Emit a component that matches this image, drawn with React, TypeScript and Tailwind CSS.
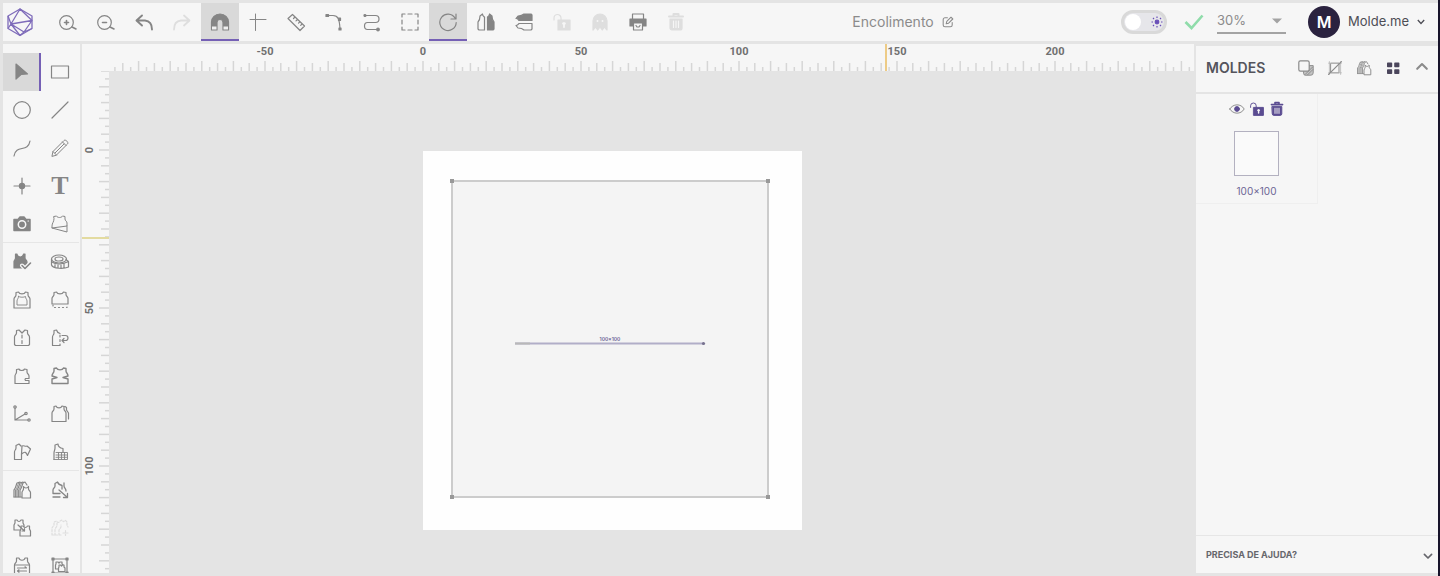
import type { ReactNode } from 'react';
import clsx from 'clsx';

interface Tool {
  name: string;
  icon: ReactNode;
  active?: boolean;
  disabled?: boolean;
}

const UNIT = 3.16;

const VEST = 'M4 2.5 L6.5 2 C7.5 4.5 12.5 4.5 13.5 2 L16 2.5 V5 C16 7 18 7 18 9 V18 H2 V9 C2 7 4 7 4 5 Z';
const SHORT_VEST = 'M4 2.5 L6.5 2 C7.5 4.5 12.5 4.5 13.5 2 L16 2.5 V4.5 C16 6.5 18 6.5 18 8.5 V14 H2 V8.5 C2 6.5 4 6.5 4 4.5 Z';

const Icon = ({ children, size = 20 }: { children: ReactNode; size?: number }) => (
  <svg
    width={size}
    height={size}
    viewBox="0 0 20 20"
    fill="none"
    stroke="currentColor"
    strokeWidth={1.2}
    strokeLinecap="round"
    strokeLinejoin="round"
    aria-hidden="true"
  >
    {children}
  </svg>
);

const LockArt = () => (
  <>
    <path d="M2 8 V6 a3.5 3.5 0 0 1 7 0 V9" />
    <path d="M6 8 H18 V18 H6 Z" fill="currentColor" />
    <path d="M12 11 V15 M11 11.5 H13" stroke="#f6f6f6" strokeWidth={1.8} />
  </>
);

const TrashArt = () => (
  <>
    <path d="M3 4.5 H17 M7.5 4 V2 H12.5 V4" strokeWidth={2} />
    <path d="M4 7 H16 V16 a2 2 0 0 1 -2 2 H6 a2 2 0 0 1 -2 -2 Z" fill="currentColor" />
    <path d="M7.5 9 V15.5 M10 9 V15.5 M12.5 9 V15.5" stroke="#f6f6f6" />
  </>
);

const VestStack = () => (
  <>
    <path d="M2 17 V10 C4 8 4 5 5 3 L8 2 M5 17 V10 C7 8 7 5 8 3 L11 2 M8 17 V10 C10 8 10 5 11 3 L13 2 L15 5" />
    <path d="M3.5 17 V10 C5.5 8 5.5 5 6.5 3 M6.5 17 V10 C8.5 8 8.5 5 9.5 3 M2 17 H10" strokeWidth={0.9} />
    <path d="M10 18 V12.5 C10 11 11.5 10.5 11.5 9 V6.5 C12.5 8.5 15.5 8.5 16.5 6.5 V9 C16.5 10.5 18.5 11 18.5 12.5 V18 Z" fill="#f6f6f6" />
  </>
);

const topTools: Tool[] = [
  {
    name: 'Aumentar zoom',
    icon: <><circle cx="8.5" cy="10.5" r="6.8" /><path d="M14 15 L18 17 M8.5 8.5 V12.5 M6.5 10.5 H10.5" strokeWidth={1.6} /></>,
  },
  {
    name: 'Diminuir zoom',
    icon: <><circle cx="8.5" cy="10.5" r="6.8" /><path d="M14 15 L18 17 M6.5 10.5 H10.5" strokeWidth={1.6} /></>,
  },
  { name: 'Desfazer', icon: <path d="M8 3.5 L2.5 8.5 L8 13.5 M3 8.5 H11 C16 9 18 12 18 17.5" strokeWidth={1.9} /> },
  { name: 'Refazer', icon: <path d="M12 3.5 L17.5 8.5 L12 13.5 M17 8.5 H9 C4 9 2 12 2 17.5" strokeWidth={1.8} />, disabled: true },
  {
    name: 'Magnetismo',
    active: true,
    icon: (
      <>
        <path d="M1.5 18 V10 a8.5 8 0 0 1 17 0 V18 H13 V10.5 a3 3 0 0 0 -6 0 V18 Z" fill="currentColor" />
        <path d="M2 14.5 H6.5 V17.5 H2 Z M13.5 14.5 H18 V17.5 H13.5 Z" fill="#efefef" stroke="none" />
      </>
    ),
  },
  { name: 'Guias', icon: <path d="M7.5 2 V18.5 M2 7.5 H18" strokeWidth={1} /> },
  { name: 'Medir', icon: <path d="M2 6.5 L6.5 2.5 L18.5 14 L14 18.5 Z M9 5 L7.5 6.5 M11.5 7.3 L10 8.8 M14 9.7 L12.5 11.2 M16 12 L14.7 13.3" /> },
  {
    name: 'Curva',
    icon: <><path d="M3 3.5 H9 C14 3.5 15.5 7 16 17" /><path d="M2 2.5 H4.5 V4.5 H2 Z M14.5 6 H16.5 V8.5 H14.5 Z M15 16 H17 V18 H15 Z" fill="currentColor" /></>,
  },
  {
    name: 'Costura',
    icon: <><path d="M3 3.5 H13.5 a3.5 3.5 0 0 1 0 7 H5.5 a3 3.5 0 0 0 0 7 H16" /><circle cx="3" cy="3.5" r="1" fill="currentColor" /><circle cx="16" cy="17.5" r="1.3" fill="currentColor" /></>,
  },
  { name: 'Selecionar', icon: <path d="M5 2 H2 V5 M8 2 H12 M15 2 H18 V5 M18 8 V12 M18 15 V18 H15 M12 18 H8 M5 18 H2 V15 M2 12 V8" /> },
  { name: 'Girar', active: true, icon: <path d="M17 6 A8.2 8.2 0 1 0 18.2 10.5 M18 2 V7 H13" /> },
  {
    name: 'Espelhar na horizontal',
    icon: <><path d="M6.5 2 C6.5 4 8 4.5 8.5 5 V18 H3 L2 17 V10 C3 9 4 8 4 4 Z" /><path d="M13.5 2 C13.5 4 12 4.5 11.5 5 V18 H17 L18 17 V10 C17 9 16 8 16 4 Z" fill="currentColor" /></>,
  },
  {
    name: 'Espelhar na vertical',
    icon: <><path d="M2 6.5 C4 6.5 4.5 8 5 8.5 H18 V3 L17 2 H10 C9 3 8 4 4 4 Z" fill="currentColor" /><path d="M2 13.5 C4 13.5 4.5 12 5 11.5 H18 V17 L17 18 H10 C9 17 8 16 4 16 Z" /></>,
  },
  { name: 'Desbloquear', disabled: true, icon: <LockArt /> },
  {
    name: 'Fantasma',
    disabled: true,
    icon: <><path d="M3 18 V9 a7 7 0 0 1 14 0 V18 L14.5 15 L12.3 18 L10 15 L7.7 18 L5.5 15 Z" fill="currentColor" /><circle cx="7.5" cy="9" r="1.6" fill="#f6f6f6" /><circle cx="12.5" cy="9" r="1.6" fill="#f6f6f6" /></>,
  },
  {
    name: 'Imprimir',
    icon: <><path d="M2 7 H18 V14 H2 Z" fill="currentColor" /><path d="M4.5 7 V2 H15.5 V7" /><path d="M5.5 11 H14.5 V18 H5.5 Z" fill="#f6f6f6" /><path d="M8 13.5 L9 15 H11 L12 13.5" /></>,
  },
  { name: 'Excluir', disabled: true, icon: <TrashArt /> },
];

const drawTools: Tool[] = [
  { name: 'Cursor', active: true, icon: <path d="M4 2 L15.5 12 L9 12.5 L4 17 Z" fill="currentColor" /> },
  { name: 'Retângulo', icon: <path d="M1.5 4 H18.5 V16 H1.5 Z" /> },
  { name: 'Elipse', icon: <circle cx="10" cy="10" r="8.3" /> },
  { name: 'Linha', icon: <path d="M2 18 L18 2" /> },
  { name: 'Linha curva', icon: <path d="M2 18 C4 6 16 15 18 3" /> },
  { name: 'Lápis', icon: <path d="M2 18 L3 13.5 L14 2.5 C15.5 1 19 4.5 17.5 6 L6.5 17 Z M12.5 4 L16 7.5 M3 13.5 L6.5 17 M5 15 L14 6" strokeWidth={1} /> },
  { name: 'Ponto', icon: <><path d="M10 2 V18 M2 10 H18" /><circle cx="10" cy="10" r="2.6" fill="currentColor" /></> },
  { name: 'Texto', icon: <span className="font-['Liberation_Serif',serif] text-[26px] leading-8 font-bold">T</span> },
  {
    name: 'Foto',
    icon: <><path d="M2 5.5 H6 L8 3 H12 L14 5.5 H18 V16.5 H2 Z" fill="currentColor" strokeWidth={1.5} /><circle cx="10" cy="10.5" r="3.7" stroke="#f6f6f6" strokeWidth={1.5} /><path d="M16 7 H16.5" stroke="#f6f6f6" /></>,
  },
  { name: 'Cortar molde', icon: <path d="M4 2.5 L6.5 2 C7.5 4 11.5 4 12.5 2 L15 2.5 V5 C15 7 17 7 17 9 V12 L2 14 V12 C2 9 4 8 4 5 Z M2 14 L17 18 V12" strokeWidth={1} /> },
];

const patternTools: Tool[] = [
  {
    name: 'Validar molde',
    icon: <><path d="M3.5 2 H5 C5.5 6 11 6 11.5 2 H13 V6 C13 8 15 8 15 10 V16 H2 V9.5 C2 8 3.5 8 3.5 6 Z" fill="currentColor" /><path d="M10 13.5 L13 16.5 L18.5 11" stroke="#f6f6f6" strokeWidth={4} /><path d="M10 13.5 L13 16.5 L18.5 11" strokeWidth={1.6} /></>,
  },
  {
    name: 'Fita métrica',
    icon: <><ellipse cx="9" cy="7" rx="7.5" ry="4" /><ellipse cx="9" cy="7" rx="4" ry="2" /><path d="M1.5 7 V13 C3 17 14 17 18.5 15 V9.5 L16 7.5 M2 10 C6 13 13 12.5 18.5 9.5 M5 12.5 V15.5 M8 13 V16 M11 13 V16 M14 12 V15.5" /></>,
  },
  { name: 'Margem', icon: <><path d={VEST} /><path d="M6.5 6.5 C8 7.5 12 7.5 13.5 6.5 C13.5 9 15 9 15 11 V15 H5 V11 C5 9 6.5 9 6.5 6.5 Z" strokeWidth={0.9} /></> },
  { name: 'Bainha', icon: <><path d={SHORT_VEST} /><path d="M3 15 V17.5 H17 V15" strokeDasharray="1 3" /></> },
  { name: 'Dividir ao meio', icon: <><path d="M4.5 2.5 L7 2 L10 5 L13 2 L15.5 2.5 V5 C15.5 7 17.5 7 17.5 9 V16.5 L16.5 17.5 H3.5 L2.5 16.5 V9 C2.5 7 4.5 7 4.5 5 Z" /><path d="M10 7 V17" strokeDasharray="3 2.5" /></> },
  { name: 'Desdobrar', icon: <><path d="M10 17.5 H2.5 V9 C2.5 7 4 7 4 5 V2.5 L6.5 2 C7 4 8 5 10 5.5" /><path d="M10 7 V17" strokeDasharray="2 2.5" /><path d="M12 7.5 H15.5 a2.5 2.5 0 0 1 0 5 H12 M14 10.5 L12 12.5 L14 14.5" /></> },
  { name: 'Pence', icon: <path d="M4.5 3.5 L7 3 C7.5 5 12 5 12.5 3 L15 3.5 V6 C15 8 17 8 17 10 V12.5 H13.5 L13 13.5 L13.5 14.5 H17 V17.5 H3 V10 C3 8 4.5 8 4.5 6 Z" /> },
  { name: 'Pence dupla', icon: <path d="M4 2.5 L6.5 2 C7.5 4.5 12.5 4.5 13.5 2 L16 2.5 V5 C16 7 18 7 18 10 L13 11.5 L18 13 V17.5 H2 V13 L7 11.5 L2 10 C2 7 4 7 4 5 Z" strokeWidth={1.4} /> },
  { name: 'Ângulo', icon: <><path d="M3 4 V16 H16 M3 16 L13 10" /><circle cx="3" cy="3" r="1.2" /><circle cx="14" cy="9.5" r="1.2" /><circle cx="17" cy="16" r="1.2" /></> },
  { name: 'Graduar', icon: <path d="M4 2.5 L6 2 C7 4.5 11 4.5 12 2 L14 2.5 V5 C14 7 16 7 16 9 V17.5 H2 V9 C2 7 4 7 4 5 Z M15 2.5 L16.5 3.5 V6 L18.5 9 V15" /> },
  { name: 'Abrir molde', icon: <><path d="M9 4 L7 2 L4 3.5 V6 C4 8 2.5 8 2.5 10 V17.5 H9.5 V12" /><path d="M10 4 C12 3 13 5 15 4 L18.5 7 L15.5 13.5 C14 10 13 9 9.5 12 Z" /></> },
  { name: 'Pregas', icon: <><path d="M4 17.5 V11 C4 9 5 8 5 6 V3 L8 2 C8 5 10 6 13 6.5 V10" /><path d="M6 10.5 H17.5 V17.5 H4 M6 13 H17 M6 15.3 H17 M8.5 10.5 V17 M11.5 10.5 V17 M14.5 10.5 V17" strokeWidth={0.9} /></> },
];

const gradeTools: Tool[] = [
  { name: 'Agrupar', icon: <VestStack /> },
  { name: 'Mover molde', icon: <path d="M10 13.5 H3 V10 C3 8 5 8 5 6 V3.5 L7.5 2 C8 4 10 5 12 5.5 V9 M14 3 V6 C14 8 16 8.5 16 11 M3 17 H10 M9 10 L17.5 17.5 M17.5 13.5 V17.5 H13.5" strokeWidth={1.3} /> },
  {
    name: 'Copiar molde',
    icon: <><path d="M3 2 H5 C6 4 8 4 9 2 H11 V5 L12 7 V12 H2 V7 L3 5 Z" /><path d="M9 8 H11 C12 10 14.500 10 15.5 8 H17.5 V11 L18.5 13 V18 H8 V13 L9 11 Z" fill="#f6f6f6" /><path d="M6 7 L12.5 13 M12.5 10.5 V13 H10" /></>,
  },
  { name: 'Adicionar ao grupo', disabled: true, icon: <path d="M2 17 V10 L4 7 V4 L7 3 C8 5 9 5 10 3 L12 2 C13 4 14 4 15 2 L17 4 V7 L18 9 M5 17 V11 L7 8 V5 M2 17 H12 M9 17 V12 L11 9 V7 M13 15 H18 M15.5 12.5 V17.5" strokeDasharray="2 1.5" /> },
  { name: 'Largura', icon: <path d="M4.5 2 H7 C7.5 5 12.5 5 13 2 H15.5 V5 C15.5 7 17.5 7 17.5 9 V18 H2.5 V9 C2.5 7 4.5 7 4.5 5 Z M3 9 H17 M5.5 12 H14.5 L13 10.8 M5.5 15 H14.5 M7 13.8 L5.5 15 L7 16.2" /> },
  {
    name: 'Encaixe',
    icon: <><path d="M3 3 H17 V17 H3 Z" /><path d="M6 6 H8 L9 7 L10 6 H12 V8 L13 9 V13 H5.5 V9 L6 8 Z" fill="#f6f6f6" /><path d="M9 9 H10.5 L11.5 10 L12.5 9 H14 V11 L15 12 V15.5 H8.5 V12 L9 11 Z" fill="#f6f6f6" /><path d="M2 2 H4 V4 H2 Z M16 2 H18 V4 H16 Z M2 16 H4 V18 H2 Z M16 16 H18 V18 H16 Z" fill="currentColor" /></>,
  },
];

const toolTone = (tool: Tool) => (tool.disabled ? 'text-[#dedede]' : 'text-[#858585]');

const Logo = () => (
  <svg width="28" height="30" viewBox="0 0 28 30" fill="none" stroke="#7f6cba" strokeWidth={1.3} strokeLinejoin="round" aria-label="Molde.me">
    <path d="M14 2 L26 9 V21.5 L14 28.5 L2 21.5 V9 Z" />
    <path d="M14 2 L5 17 L26 13.5 Z M5 17 L18 25 L26 13.5 M2 9 L5 17 L2 21.5 M14 28.5 L18 25 L26 21.5 M5 17 L14 28.5" />
  </svg>
);

const TopBar = () => (
  <header className="flex h-[38px] shrink-0 items-stretch bg-[#f6f6f6]">
    <a href="#inicio" className="flex w-[46px] items-center pl-[3px]"><Logo /></a>
    <nav className="flex">
      {topTools.map((tool) => (
        <button
          key={tool.name}
          type="button"
          aria-label={tool.name}
          disabled={tool.disabled}
          className={clsx(
            'flex w-[38px] items-center justify-center',
            toolTone(tool),
            tool.active && 'bg-[#d9d9d9] shadow-[inset_0_-2px_0_#7560b5]'
          )}
        >
          <Icon>{tool.icon}</Icon>
        </button>
      ))}
    </nav>
    <div className="flex flex-1 items-center justify-center gap-2 pr-[10px] text-sm text-[#8b8b8b]">
      <span>Encolimento</span>
      <button type="button" aria-label="Renomear">
        <Icon size={12}>
          <path d="M9 3 H5 a3 3 0 0 0 -3 3 V15 a3 3 0 0 0 3 3 H14 a3 3 0 0 0 3 -3 V11" strokeWidth={1.8} />
          <path d="M7 13 L8 9 L15 2 L18 5 L11 12 Z" strokeWidth={1.8} />
        </Icon>
      </button>
    </div>
    <div className="flex items-center pr-[13px]">
      <label className="relative flex cursor-pointer items-center">
        <input type="checkbox" aria-label="Tema escuro" className="h-6 w-[46px] appearance-none rounded-full border-3 border-[#d9d9d9] bg-[#e6e6ea]" />
        <span className="absolute left-1 size-4 rounded-full bg-white" />
        <svg className="absolute right-1 text-[#6a50b8]" width="12" height="12" viewBox="0 0 12 12" stroke="currentColor" strokeWidth={1.2}>
          <circle cx="6" cy="6" r="1.8" fill="currentColor" />
          <path d="M6 0.5 V2 M6 10 V11.5 M0.5 6 H2 M10 6 H11.5 M2 2 L3 3 M9 9 L10 10 M10 2 L9 3 M3 9 L2 10" />
        </svg>
      </label>
      <svg className="ml-4" width="22" height="20" viewBox="0 0 22 20" fill="none" stroke="#8fdcaa" strokeWidth={2.6} aria-label="Salvo">
        <path d="M2.5 10 L8.5 16 L19.5 3.5" />
      </svg>
      <div className="relative ml-3 flex h-6 w-[69px] items-center border-b-2 border-[#a3a3a3]">
        <select aria-label="Zoom" defaultValue="30" className="w-full appearance-none bg-transparent text-[13px] text-[#8b8b8b] outline-none">
          <option value="30">30%</option>
          <option value="50">50%</option>
          <option value="100">100%</option>
        </select>
        <svg className="pointer-events-none absolute right-1" width="10" height="6" viewBox="0 0 10 6" fill="#a3a3a3">
          <path d="M0 0.5 H10 L5 5.5 Z" />
        </svg>
      </div>
      <button type="button" className="ml-[22px] flex items-center text-[13px] text-[#4d4d55]">
        <span className="mr-2 flex size-8 items-center justify-center rounded-full bg-[#2a223f] text-base font-semibold text-white">M</span>
        Molde.me
        <svg className="ml-2" width="8" height="6" viewBox="0 0 8 6" fill="none" stroke="currentColor" strokeWidth={1.3}>
          <path d="M0.8 1 L4 4.5 L7.2 1" />
        </svg>
      </button>
    </div>
  </header>
);

const ToolGroup = ({ tools }: { tools: Tool[] }) => (
  <div className="grid grid-cols-2">
    {tools.map((tool) => (
      <button
        key={tool.name}
        type="button"
        aria-label={tool.name}
        disabled={tool.disabled}
        className={clsx(
          'flex h-[38px] items-center justify-center',
          toolTone(tool),
          tool.active && 'bg-[#d9d9d9] shadow-[inset_-2px_0_0_#7560b5]'
        )}
      >
        {tool.name === 'Texto' ? tool.icon : <Icon>{tool.icon}</Icon>}
      </button>
    ))}
  </div>
);

const ToolPanel = () => (
  <aside className="w-[77px] shrink-0 overflow-hidden bg-[#f6f6f6] pt-[9px] pr-px">
    <ToolGroup tools={drawTools} />
    <hr className="-mt-px border-[#e6e6e6]" />
    <ToolGroup tools={patternTools} />
    <hr className="-mt-px border-[#e6e6e6]" />
    <ToolGroup tools={gradeTools} />
  </aside>
);

// One tick for every 2.5 units, counted from the ruler's own zero.
const tickPositions = (origin: number, from: number, length: number) => {
  const step = UNIT * 2.5;
  const ticks: { pos: number; size: number }[] = [];
  for (let i = Math.ceil((from - origin) / step); origin + i * step < length; i++) {
    ticks.push({ pos: origin + i * step, size: i % 4 === 0 ? 10 : i % 2 === 0 ? 8 : 4 });
  }
  return ticks;
};

const rulerText = 'text-[11px] font-bold fill-[#707070] font-[Roboto,sans-serif]';

const TopRuler = () => (
  <svg className="h-[27px] w-full shrink-0 bg-[#f6f6f6]" aria-hidden="true">
    {tickPositions(341, 32, 2400).map(({ pos, size }) => (
      <line key={pos} x1={pos} x2={pos} y1={27 - size} y2={27} stroke="#d6d6d6" strokeWidth={1.5} />
    ))}
    {[-50, 0, 50, 100, 150, 200].map((n) => (
      <text key={n} x={341 + n * UNIT} y={11} textAnchor="middle" className={rulerText}>{n}</text>
    ))}
    <line x1="804" x2="804" y1="0" y2="27" stroke="#edcb86" strokeWidth={2} />
  </svg>
);

const SideRuler = () => (
  <svg className="h-full w-[27px] shrink-0 bg-[#f6f6f6]" aria-hidden="true">
    {tickPositions(79, 0, 1400).map(({ pos, size }) => (
      <line key={pos} x1={27 - size} x2={27} y1={pos} y2={pos} stroke="#d6d6d6" strokeWidth={1.5} />
    ))}
    {[0, 50, 100].map((n) => (
      <text key={n} transform={`translate(11 ${79 + n * UNIT}) rotate(-90)`} textAnchor="middle" className={rulerText}>{n}</text>
    ))}
    <line x1="0" x2="27" y1="167" y2="167" stroke="#e3dba0" strokeWidth={2} />
  </svg>
);

const Canvas = () => (
  <main className="relative flex-1 overflow-hidden bg-[#e4e4e4]">
    <svg className="absolute left-[314px] top-[80px]" width="379" height="379" viewBox="0 0 379 379">
      <rect width="379" height="379" fill="#fefefe" />
      <rect x="29" y="30" width="316" height="316" fill="#f4f4f4" stroke="#cccccc" strokeWidth={2} />
      {[[29, 30], [345, 30], [29, 346], [345, 346]].map(([x, y]) => (
        <rect key={`${x}-${y}`} x={x - 2} y={y - 2} width="4" height="4" fill="#999999" />
      ))}
      <line x1="92" x2="281" y1="192.5" y2="192.5" stroke="#b1aec8" strokeWidth={2} />
      <line x1="92" x2="107" y1="192.5" y2="192.5" stroke="#b8b8b8" strokeWidth={2} />
      <circle cx="280.5" cy="192.5" r="1.6" fill="#77728f" />
      <text x="187" y="190" textAnchor="middle" fill="#6c6494" fontWeight="600" className="text-[5px]">100×100</text>
    </svg>
  </main>
);

const PiecesPanel = () => (
  <aside className="mt-0.5 flex w-[242px] shrink-0 flex-col bg-[#f6f6f6]">
    <div className="flex h-[48px] items-center border-b-2 border-[#e4e4e4] pr-2 pb-0.5 pl-[10px] text-[#8b8b8b]">
      <h2 className="flex-1 text-sm font-semibold text-[#54545c]">MOLDES</h2>
      <div className="flex items-center gap-[13px]">
        <button type="button" aria-label="Duplicar">
          <Icon size={16}>
            <path d="M7 7 H19 V16 a3 3 0 0 1 -3 3 H9 a2 2 0 0 1 -2 -2 Z" fill="#c4c4c4" />
            <path d="M9 18 L18 9 M12 18.5 L18.5 12" />
            <rect x="1" y="1" width="13" height="13" rx="2" fill="#f6f6f6" strokeWidth={1.5} />
          </Icon>
        </button>
        <button type="button" aria-label="Ocultar preenchimento">
          <Icon size={16}>
            <rect x="5" y="4" width="10" height="12" />
            <path d="M2 4 H18 M2 16 H18 M3 2 V18 M17 2 V18" stroke="#b5b5b5" strokeWidth={1} />
            <path d="M2 18 L18 2" strokeWidth={1.6} />
          </Icon>
        </button>
        <button type="button" aria-label="Agrupar moldes"><Icon size={16}><VestStack /></Icon></button>
        <button type="button" aria-label="Ver em grade" className="text-[#4b465c]">
          <Icon size={16}>
            <path d="M3.5 4 H8 V8 H3.5 Z M12.5 4 H17 V8 H12.5 Z M3.5 12.5 H8 V16.5 H3.5 Z M12.5 12.5 H17 V16.5 H12.5 Z" fill="currentColor" strokeWidth={2} />
          </Icon>
        </button>
        <button type="button" aria-label="Recolher painel">
          <Icon size={16}><path d="M4 11 L10 5 L16 11" strokeWidth={2.6} /></Icon>
        </button>
      </div>
    </div>
    <div className="flex-1">
      <div className="flex h-[110px] w-[122px] flex-col items-center border-r border-b border-[#efefef] pt-[7px] text-[#5b4c91]">
        <div className="flex items-center gap-1">
          <button type="button" aria-label="Mostrar molde">
            <Icon size={16}>
              <path d="M1 10 C5 3 15 3 19 10 C15 17 5 17 1 10 Z" stroke="#8b8b8b" />
              <circle cx="10" cy="10" r="3" fill="currentColor" />
            </Icon>
          </button>
          <button type="button" aria-label="Bloquear molde"><Icon size={16}><LockArt /></Icon></button>
          <button type="button" aria-label="Excluir molde"><Icon size={16}><TrashArt /></Icon></button>
        </div>
        <div className="mt-[14px] size-[45px] shrink-0 border border-[#b3b1c0] bg-[#fafafa]" />
        <span className="mt-2 text-[10px] leading-[14px] text-[#6c6494]">100×100</span>
      </div>
    </div>
    <button type="button" className="flex h-[38px] items-center justify-between border-t border-[#e6e6e6] pr-1 pl-[10px] text-[9px] font-bold text-[#66666c]">
      PRECISA DE AJUDA?
      <Icon size={12}><path d="M4 9 L10 15 L16 9" strokeWidth={2.8} /></Icon>
    </button>
  </aside>
);

const App = () => (
  <div className="flex h-screen flex-col gap-[3px] overflow-hidden border-r-2 border-[#17132a] bg-[#e4e4e4] py-[3px] pl-[3px] font-[Inter,sans-serif]">
    <TopBar />
    <div className="flex min-h-0 flex-1 gap-0.5">
      <ToolPanel />
      <div className="flex min-w-0 flex-1 flex-col">
        <TopRuler />
        <div className="flex min-h-0 flex-1">
          <SideRuler />
          <Canvas />
        </div>
      </div>
      <PiecesPanel />
    </div>
  </div>
);

export default App;
